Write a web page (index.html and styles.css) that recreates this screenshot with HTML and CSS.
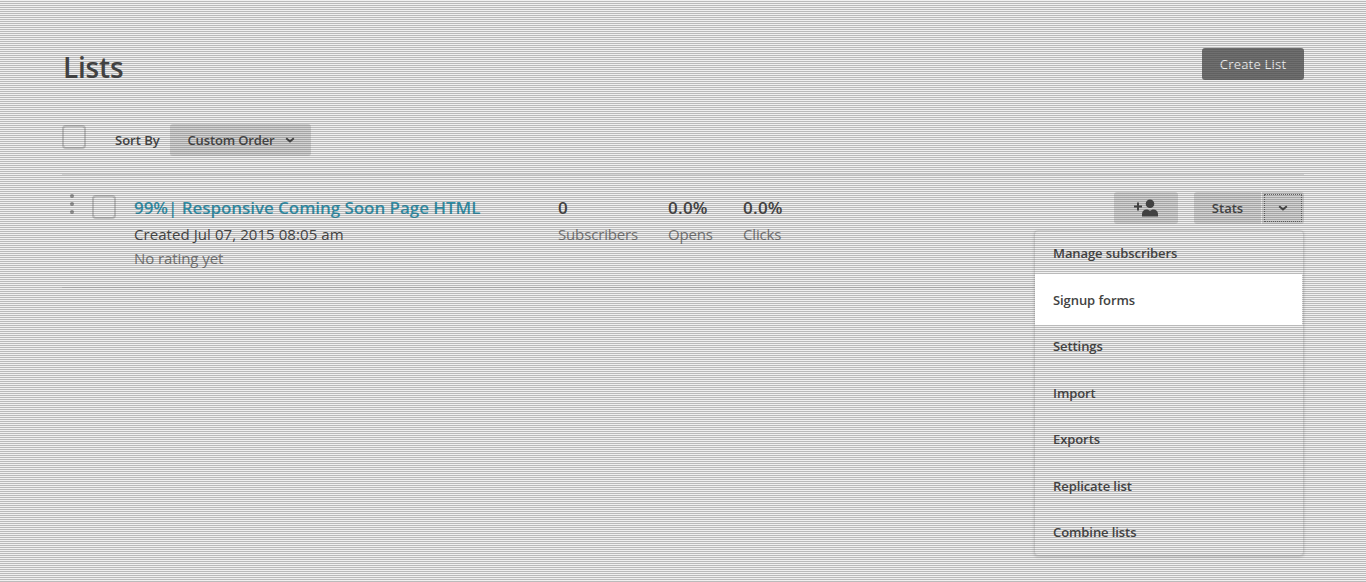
FILE: index.html
```html
<!DOCTYPE html>
<html lang="en">
<head>
<meta charset="utf-8">
<title>Lists</title>
<link rel="stylesheet" href="styles.css">
</head>
<body>
<main class="page">
  <header class="page-header">
    <h1 class="title">Lists</h1>
    <button class="btn btn-dark">Create List</button>
  </header>
  <section class="toolbar">
    <span class="checkbox"></span>
    <span class="sort-label">Sort By</span>
    <button class="btn sort">Custom Order
      <svg class="chevron" viewBox="0 0 10 6"><path d="M1.2 1.2 5 4.400 8.800 1.200"/></svg>
    </button>
  </section>
  <article class="list-row">
    <svg class="handle" viewBox="0 0 4 20"><circle cx="2" cy="2" r="2"/><circle cx="2" cy="10" r="2"/><circle cx="2" cy="18" r="2"/></svg>
    <span class="checkbox"></span>
    <div class="info">
      <a class="list-name">99%| Responsive Coming Soon Page HTML</a>
      <div class="created">Created Jul 07, 2015 08:05 am</div>
      <div class="muted rating">No rating yet</div>
    </div>
    <div class="stat subscribers"><b>0</b><span class="muted">Subscribers</span></div>
    <div class="stat opens"><b>0.0%</b><span class="muted">Opens</span></div>
    <div class="stat"><b>0.0%</b><span class="muted">Clicks</span></div>
    <div class="actions">
      <button class="btn add" aria-label="Add subscriber">
        <svg class="person" viewBox="0 0 25 18"><path class="plus" d="M0 7.500h8M4 3.500v8"/><circle cx="16" cy="4.800" r="4.300"/><path d="M8 17.500v-2.500c0-3 2-4.500 4.500-4.500h1l2.500 1.300 2.500-1.300h1c2.500 0 4.500 1.500 4.500 4.500v2.500z"/></svg>
      </button>
      <button class="btn stats">Stats</button>
      <button class="btn more" aria-label="More">
        <svg class="chevron" viewBox="0 0 10 6"><path d="M1.200 1.200 5 4.400 8.800 1.200"/></svg>
      </button>
      <nav class="menu">
        <a>Manage subscribers</a>
        <a class="active">Signup forms</a>
        <a>Settings</a>
        <a>Import</a>
        <a>Exports</a>
        <a>Replicate list</a>
        <a>Combine lists</a>
      </nav>
    </div>
  </article>
</main>
<div class="overlay"></div>
</body>
</html>
```
FILE: styles.css
```css
* { box-sizing: border-box; }
html, body { height: 100%; }
body { margin: 0; background: #fff; color: #424242; font: 15px/24px "Open Sans", sans-serif; overflow: hidden; }
.page { padding: 48px 62px 0; }
.page-header { display: flex; justify-content: space-between; align-items: flex-start; height: 76px; }
.title { margin: 0 0 0 1px; font-size: 28px; line-height: 38px; font-weight: 600; letter-spacing: -0.200px; }
.btn { display: flex; align-items: center; justify-content: center; height: 32px; padding: 0; border: 0; border-radius: 3px; background: #dedede; color: #424242; font: 600 13px/18px "Open Sans", sans-serif; }
.btn-dark { width: 102px; background: #737373; color: #fff; font-weight: 400; letter-spacing: 0.200px; }
.toolbar { display: flex; height: 51px; border-bottom: 1px solid #e0e0e0; }
.checkbox { width: 24px; height: 24px; margin-top: 1px; border: 2px solid #d0d0d0; border-radius: 4px; }
.sort-label { width: 55px; margin-left: 29px; padding-top: 4px; font-size: 13px; font-weight: 600; }
.sort { width: 141px; gap: 11px; padding-left: 2px; letter-spacing: -0.150px; }
.chevron { width: 10px; height: 6px; fill: none; stroke: #424242; stroke-width: 2; }
.list-row { display: flex; height: 113px; padding-top: 17px; border-bottom: 1px solid #e0e0e0; }
.handle { width: 4px; height: 20px; margin: 2px 20px 0 8px; fill: #999; }
.list-row .checkbox { margin: 3px 18px 0 -2px; }
.info { width: 424px; padding-top: 3px; white-space: nowrap; }
.list-name { display: block; color: #2c9ab7; font-size: 17px; font-weight: 600; line-height: 25px; letter-spacing: -0.050px; }
.created { margin-top: 2px; letter-spacing: 0.070px; }
.muted { color: #7a7a7a; }
.rating { letter-spacing: -0.080px; }
.stat { padding-top: 3px; }
.stat b { display: block; font-size: 17px; font-weight: 600; line-height: 25px; margin-bottom: 2px; letter-spacing: 0.250px; }
.stat .muted { letter-spacing: -0.150px; }
.subscribers { width: 110px; }
.opens { width: 75px; }
.actions { display: flex; position: relative; margin-left: auto; }
.add { width: 64px; margin-right: 16px; }
.person { width: 25px; height: 18px; fill: #424242; }
.plus { fill: none; stroke: #424242; stroke-width: 2; }
.stats { width: 67px; border-radius: 3px 0 0 3px; }
.more { width: 42px; margin-left: 1px; border-radius: 0 3px 3px 0; outline: 1px dotted #666; outline-offset: -3px; }
.menu { position: absolute; top: 38px; right: 0; width: 270px; height: 326px; border: 1px solid #e0e0e0; border-radius: 4px; background: #fff; box-shadow: 0 1px 3px rgba(0,0,0,.18); }
.menu a { display: flex; align-items: center; height: 46.500px; padding-left: 18px; font-size: 13px; font-weight: 600; letter-spacing: -0.080px; }
.menu a:first-child { margin-top: -1px; }
.menu .active { position: relative; z-index: 2; height: 51px; margin: -2.500px 1px -2px 0; background: #fff; }
.overlay { position: absolute; inset: 0; z-index: 1; pointer-events: none; background: repeating-linear-gradient(rgba(64,64,64,.08) 0 1px, rgba(64,64,64,.36) 1px 2px); }
```
